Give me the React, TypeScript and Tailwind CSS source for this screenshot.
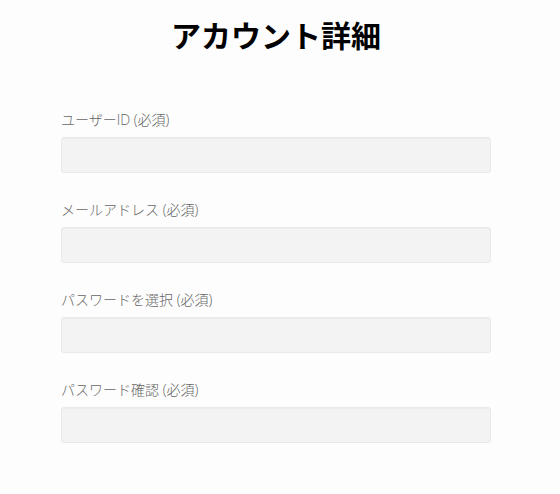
const FIELDS = [
  { label: "ユーザーID (必須)", type: "text" },
  { label: "メールアドレス (必須)", type: "email" },
  { label: "パスワードを選択 (必須)", type: "password" },
  { label: "パスワード確認 (必須)", type: "password" },
];

export default function App() {
  return (
    <div className="min-h-[494px] bg-[#fdfdfd] font-['Open_Sans','Noto_Sans_CJK_JP',sans-serif]">
      <div className="ml-[61px] w-[430px] pt-[17px]">
        <h1 className="text-center text-[30px] leading-[38px] font-bold text-black">
          アカウント詳細
        </h1>
        <form className="mt-[55px] flex flex-col gap-[27px]">
          {FIELDS.map((f) => (
            <div key={f.label} className="flex flex-col gap-[7px]">
              <label className="text-[14px] leading-[20px] font-light text-[#666666]">{f.label}</label>
              <input
                type={f.type}
                className="h-[36px] w-full rounded-[3px] border border-[#e9e9e9] bg-[#f3f3f3] px-3 outline-none shadow-[inset_0_1px_1px_rgba(0,0,0,0.03)]"
              />
            </div>
          ))}
        </form>
      </div>
    </div>
  );
}
